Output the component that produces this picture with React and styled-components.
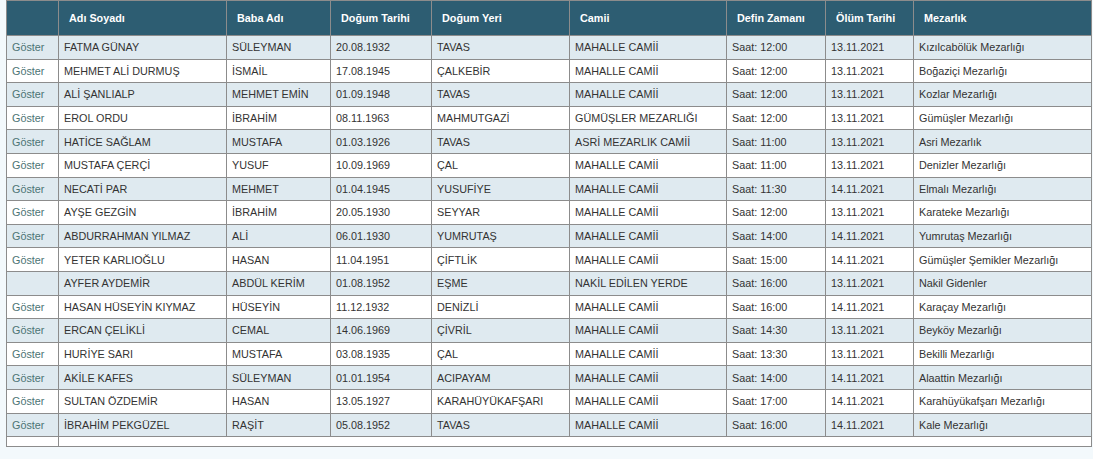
import styled, { createGlobalStyle } from 'styled-components';

const GlobalStyle = createGlobalStyle`
  html, body {
    margin: 0;
    padding: 0;
    background: #f3f9fc;
  }
  body {
    font-family: "Liberation Sans", Arial, sans-serif;
  }
`;

const Page = styled.div`
  width: 1093px;
  height: 459px;
  overflow: hidden;
  padding-left: 6px;
  box-sizing: border-box;
`;

const Table = styled.table`
  width: 1085px;
  border-collapse: collapse;
  table-layout: fixed;
  font-size: 10.8px;
  color: #333333;
  background: #ffffff;
  border: 1px solid #8c8c8c;
`;

const HeadCell = styled.th`
  height: 35px;
  padding: 0 0 0 10px;
  background: #2d5d72;
  color: #ffffff;
  font-weight: bold;
  text-align: left;
  border-right: 1px solid #8c8c8c;
  box-sizing: border-box;
`;

const Row = styled.tr`
  background: ${(p) => (p.$alt ? '#dfeaf0' : '#ffffff')};
`;

const Cell = styled.td`
  height: 23.6px;
  padding: 0 0 0 5px;
  border: 1px solid #8c8c8c;
  white-space: nowrap;
  overflow: hidden;
  box-sizing: border-box;
`;

const LinkCell = styled(Cell)`
  color: #4b7474;
`;

const EmptyCell = styled.td`
  height: 9px;
  padding: 0;
  border: 1px solid #8c8c8c;
`;

const columns = [
  { title: '', width: 52 },
  { title: 'Adı Soyadı', width: 168 },
  { title: 'Baba Adı', width: 104 },
  { title: 'Doğum Tarihi', width: 101 },
  { title: 'Doğum Yeri', width: 138 },
  { title: 'Camii', width: 157 },
  { title: 'Defin Zamanı', width: 99 },
  { title: 'Ölüm Tarihi', width: 88 },
  { title: 'Mezarlık', width: 178 },
];

const rows = [
  [true, 'FATMA GÜNAY', 'SÜLEYMAN', '20.08.1932', 'TAVAS', 'MAHALLE CAMİİ', 'Saat: 12:00', '13.11.2021', 'Kızılcabölük Mezarlığı'],
  [true, 'MEHMET ALİ DURMUŞ', 'İSMAİL', '17.08.1945', 'ÇALKEBİR', 'MAHALLE CAMİİ', 'Saat: 12:00', '13.11.2021', 'Boğaziçi Mezarlığı'],
  [true, 'ALİ ŞANLIALP', 'MEHMET EMİN', '01.09.1948', 'TAVAS', 'MAHALLE CAMİİ', 'Saat: 12:00', '13.11.2021', 'Kozlar Mezarlığı'],
  [true, 'EROL ORDU', 'İBRAHİM', '08.11.1963', 'MAHMUTGAZİ', 'GÜMÜŞLER MEZARLIĞI', 'Saat: 12:00', '13.11.2021', 'Gümüşler Mezarlığı'],
  [true, 'HATİCE SAĞLAM', 'MUSTAFA', '01.03.1926', 'TAVAS', 'ASRİ MEZARLIK CAMİİ', 'Saat: 11:00', '13.11.2021', 'Asri Mezarlık'],
  [true, 'MUSTAFA ÇERÇİ', 'YUSUF', '10.09.1969', 'ÇAL', 'MAHALLE CAMİİ', 'Saat: 11:00', '13.11.2021', 'Denizler Mezarlığı'],
  [true, 'NECATİ PAR', 'MEHMET', '01.04.1945', 'YUSUFİYE', 'MAHALLE CAMİİ', 'Saat: 11:30', '14.11.2021', 'Elmalı Mezarlığı'],
  [true, 'AYŞE GEZGİN', 'İBRAHİM', '20.05.1930', 'SEYYAR', 'MAHALLE CAMİİ', 'Saat: 12:00', '13.11.2021', 'Karateke Mezarlığı'],
  [true, 'ABDURRAHMAN YILMAZ', 'ALİ', '06.01.1930', 'YUMRUTAŞ', 'MAHALLE CAMİİ', 'Saat: 14:00', '14.11.2021', 'Yumrutaş Mezarlığı'],
  [true, 'YETER KARLIOĞLU', 'HASAN', '11.04.1951', 'ÇİFTLİK', 'MAHALLE CAMİİ', 'Saat: 15:00', '14.11.2021', 'Gümüşler Şemikler Mezarlığı'],
  [false, 'AYFER AYDEMİR', 'ABDÜL KERİM', '01.08.1952', 'EŞME', 'NAKİL EDİLEN YERDE', 'Saat: 16:00', '13.11.2021', 'Nakil Gidenler'],
  [true, 'HASAN HÜSEYİN KIYMAZ', 'HÜSEYİN', '11.12.1932', 'DENİZLİ', 'MAHALLE CAMİİ', 'Saat: 16:00', '14.11.2021', 'Karaçay Mezarlığı'],
  [true, 'ERCAN ÇELİKLİ', 'CEMAL', '14.06.1969', 'ÇİVRİL', 'MAHALLE CAMİİ', 'Saat: 14:30', '13.11.2021', 'Beyköy Mezarlığı'],
  [true, 'HURİYE SARI', 'MUSTAFA', '03.08.1935', 'ÇAL', 'MAHALLE CAMİİ', 'Saat: 13:30', '13.11.2021', 'Bekilli Mezarlığı'],
  [true, 'AKİLE KAFES', 'SÜLEYMAN', '01.01.1954', 'ACIPAYAM', 'MAHALLE CAMİİ', 'Saat: 14:00', '14.11.2021', 'Alaattin Mezarlığı'],
  [true, 'SULTAN ÖZDEMİR', 'HASAN', '13.05.1927', 'KARAHÜYÜKAFŞARI', 'MAHALLE CAMİİ', 'Saat: 17:00', '14.11.2021', 'Karahüyükafşarı Mezarlığı'],
  [true, 'İBRAHİM PEKGÜZEL', 'RAŞİT', '05.08.1952', 'TAVAS', 'MAHALLE CAMİİ', 'Saat: 16:00', '14.11.2021', 'Kale Mezarlığı'],
];

const App = () => (
  <>
    <GlobalStyle />
    <Page>
      <Table>
        <colgroup>
          {columns.map((c, i) => (
            <col key={i} style={{ width: c.width }} />
          ))}
        </colgroup>
        <thead>
          <tr>
            {columns.map((c, i) => (
              <HeadCell key={i}>{c.title}</HeadCell>
            ))}
          </tr>
        </thead>
        <tbody>
          {rows.map(([link, ...cells], i) => (
            <Row key={i} $alt={i % 2 === 0}>
              <LinkCell>{link ? 'Göster' : ''}</LinkCell>
              {cells.map((v, j) => (
                <Cell key={j}>{v}</Cell>
              ))}
            </Row>
          ))}
          <tr>
            <EmptyCell />
            <EmptyCell colSpan={8} />
          </tr>
        </tbody>
      </Table>
    </Page>
  </>
);

export default App;
